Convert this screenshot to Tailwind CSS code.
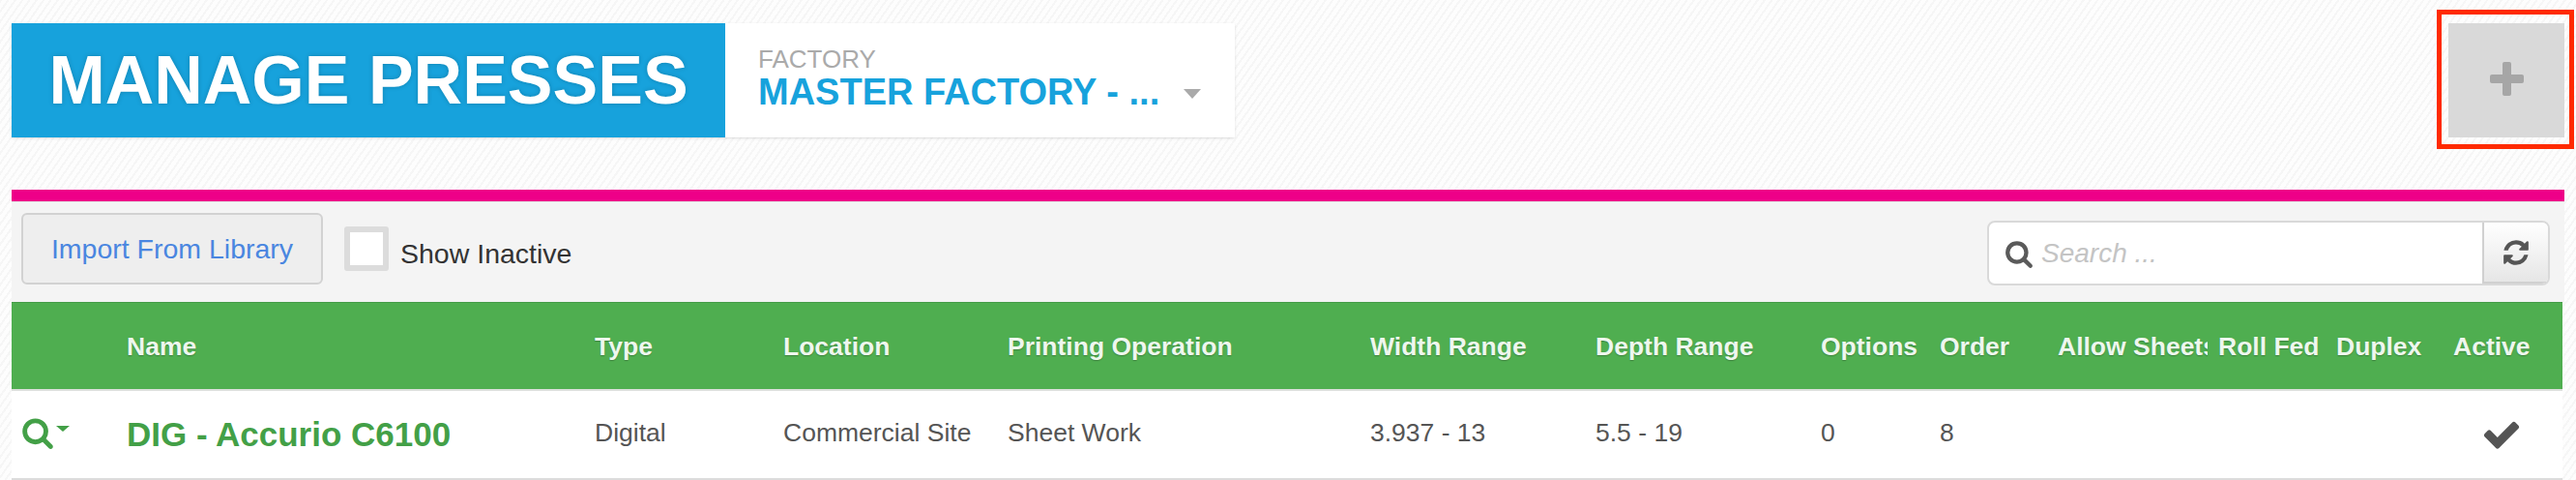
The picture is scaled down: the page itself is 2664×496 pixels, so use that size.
<!DOCTYPE html>
<html lang="en">

<head>
    <meta charset="UTF-8">
    <title>Manage Presses</title>
    <script src="https://cdn.jsdelivr.net/npm/@tailwindcss/browser@4"></script>
</head>

<body class="relative h-[496px] w-[2664px] overflow-hidden bg-[#fcfcfc] bg-[repeating-linear-gradient(125deg,#f6f6f6_0px,#f6f6f6_2px,#fdfdfd_2px,#fdfdfd_6px)] font-['Liberation_Sans',Arial,sans-serif] text-[26.5px] text-[#555]">
    <div class="pl-3 pr-3 pt-6">
        <!-- Page header -->
        <div class="flex h-[118px] justify-between">
            <div class="flex shadow-sm">
                <h1 class="flex w-[738px] items-center justify-center bg-[#17a2dc] text-[70px] font-bold text-white [text-shadow:0_0_5px_rgba(0,0,0,0.2)]">MANAGE PRESSES</h1>
                <div class="flex w-[527px] items-center bg-white pl-[34px]">
                    <div class="pb-[6px]">
                        <div class="text-[26px] leading-[30px] text-[#aaa]">FACTORY</div>
                        <div class="flex items-center text-[38px] leading-[38px] font-bold text-[#17a2dc]">
                            <span>MASTER FACTORY - ...</span>
                            <span class="ml-[25px] mt-1 h-0 w-0 border-x-[9px] border-t-[10px] border-x-transparent border-t-[#aaa]"></span>
                        </div>
                    </div>
                </div>
            </div>
            <button class="flex w-[120px] items-center justify-center bg-[#d9d9d9] pb-1">
                <svg width="35" height="35" viewBox="0 0 35 35" fill="#a6a6a6">
                    <rect x="13" y="0" width="9" height="35" rx="2"></rect>
                    <rect x="0" y="13" width="35" height="9" rx="2"></rect>
                </svg>
            </button>
        </div>

        <!-- Panel -->
        <div class="mt-[54px] border-t-[12px] border-[#ee0088]">
            <div class="flex h-[104px] items-center justify-between border-t border-[#e2e2e2] bg-[#f4f4f4] pl-[10px] pr-[15px]">
                <div class="mb-[7px] flex items-center text-[28.5px]">
                    <button class="h-[74px] w-[312px] rounded-[6px] border-2 border-[#d2d2d2] bg-[#eeeeee] text-[#4a86e0]">Import From Library</button>
                    <span class="ml-[22px] h-[46px] w-[46px] rounded-[3px] border-[6px] border-[#dcdcdc] bg-white"></span>
                    <span class="ml-3 mt-[10px] text-[#333]">Show Inactive</span>
                </div>
                <div class="mt-[2px] flex h-[67px] w-[582px] overflow-hidden rounded-[8px] border-2 border-[#d9d9d9] bg-white">
                    <div class="flex flex-1 items-center pl-[16px] text-[28px] italic text-[#c4c4c4]">
                        <svg class="mr-[8px]" width="30" height="30" viewBox="0 0 1792 1792" fill="#5a5a5a">
                            <path d="M1216 832q0-185-131.5-316.5t-316.5-131.5-316.5 131.5-131.5 316.5 131.5 316.5 316.5 131.5 316.5-131.5 131.5-316.5zm512 832q0 52-38 90t-90 38q-54 0-90-38l-343-342q-179 124-399 124-143 0-273.5-55.5t-225-150-150-225-55.5-273.5 55.5-273.5 150-225 225-150 273.5-55.5 273.5 55.5 225 150 150 225 55.5 273.5q0 220-124 399l343 343q37 37 37 90z"></path>
                        </svg>
                        Search ...
                    </div>
                    <div class="flex w-[68px] items-center justify-center border-l-2 border-b-2 border-[#d0d0d0] bg-gradient-to-b from-white to-[#e6e6e6]">
                        <svg width="30" height="30" viewBox="0 0 1792 1792" fill="#555">
                            <path d="M1639 1056q0 5-1 7-64 268-268 434.5t-478 166.5q-146 0-282.5-55t-243.5-157l-129 129q-19 19-45 19t-45-19-19-45v-448q0-26 19-45t45-19h448q26 0 45 19t19 45-19 45l-137 137q71 66 161 102t187 36q134 0 250-65t186-179q11-17 53-117 8-23 30-23h192q13 0 22.5 9.5t9.5 22.5zm25-800v448q0 26-19 45t-45 19h-448q-26 0-45-19t-19-45 19-45l138-138q-148-137-349-137-134 0-250 65t-186 179q-11 17-53 117-8 23-30 23h-199q-13 0-22.5-9.5t-9.5-22.5v-7q65-268 270-434.5t480-166.5q146 0 284 55.5t245 156.5l130-129q19-19 45-19t45 19 19 45z"></path>
                        </svg>
                    </div>
                </div>
            </div>

            <!-- Table -->
            <div class="mr-[2px] bg-white">
                <div class="grid h-[92px] grid-cols-[120px_483px_195px_232px_375px_233px_233px_123px_122px_166px_122px_121px_1fr] items-center border-t border-b-2 border-t-[#449c47] border-b-[#dde0dd] bg-[#4fae50] pt-[2px] pb-0 font-bold text-[#eef7ee] [text-shadow:0_1px_1px_rgba(0,0,0,0.25)]">
                    <div></div>
                    <div class="-ml-px">Name</div>
                    <div>Type</div>
                    <div>Location</div>
                    <div>Printing Operation</div>
                    <div>Width Range</div>
                    <div>Depth Range</div>
                    <div>Options</div>
                    <div>Order</div>
                    <div class="w-[155px] overflow-hidden whitespace-nowrap">Allow Sheets</div>
                    <div>Roll Fed</div>
                    <div>Duplex</div>
                    <div>Active</div>
                </div>
                <div class="grid h-[92px] grid-cols-[120px_483px_195px_232px_375px_233px_233px_123px_122px_166px_122px_121px_1fr] items-center border-b-2 border-[#dcdcdc]">
                    <div class="flex items-center pl-[10px] pb-1">
                        <svg width="34" height="34" viewBox="0 0 1792 1792" fill="#43a047">
                            <path d="M1216 832q0-185-131.5-316.5t-316.5-131.5-316.5 131.5-131.5 316.5 131.5 316.5 316.5 131.5 316.5-131.5 131.5-316.5zm512 832q0 52-38 90t-90 38q-54 0-90-38l-343-342q-179 124-399 124-143 0-273.5-55.5t-225-150-150-225-55.5-273.5 55.5-273.5 150-225 225-150 273.5-55.5 273.5 55.5 225 150 150 225 55.5 273.5q0 220-124 399l343 343q37 37 37 90z"></path>
                        </svg>
                        <span class="mb-[8px] ml-[2px] h-0 w-0 border-x-[7px] border-t-[6px] border-x-transparent border-t-[#43a047]"></span>
                    </div>
                    <div class="-ml-px text-[35px] font-bold text-[#43a047]">DIG - Accurio C6100</div>
                    <div class="-mt-[2px]">Digital</div>
                    <div class="-mt-[2px]">Commercial Site</div>
                    <div class="-mt-[2px]">Sheet Work</div>
                    <div class="-mt-[2px]">3.937 - 13</div>
                    <div class="-mt-[2px]">5.5 - 19</div>
                    <div class="-mt-[2px]">0</div>
                    <div class="-mt-[2px]">8</div>
                    <div></div>
                    <div></div>
                    <div></div>
                    <div class="pl-[29px]">
                        <svg width="42" height="42" viewBox="0 0 1792 1792" fill="#555">
                            <path d="M1671 566q0 40-28 68l-724 724-136 136q-28 28-68 28t-68-28l-136-136-362-362q-28-28-28-68t28-68l136-136q28-28 68-28t68 28l294 295 656-657q28-28 68-28t68 28l136 136q28 28 28 68z"></path>
                        </svg>
                    </div>
                </div>
            </div>
        </div>
    </div>

    <!-- Red annotation box over the add button -->
    <div class="absolute left-[2520px] top-[10px] h-[144px] w-[142px] border-[5px] border-[#ff2a00]"></div>
</body>

</html>
